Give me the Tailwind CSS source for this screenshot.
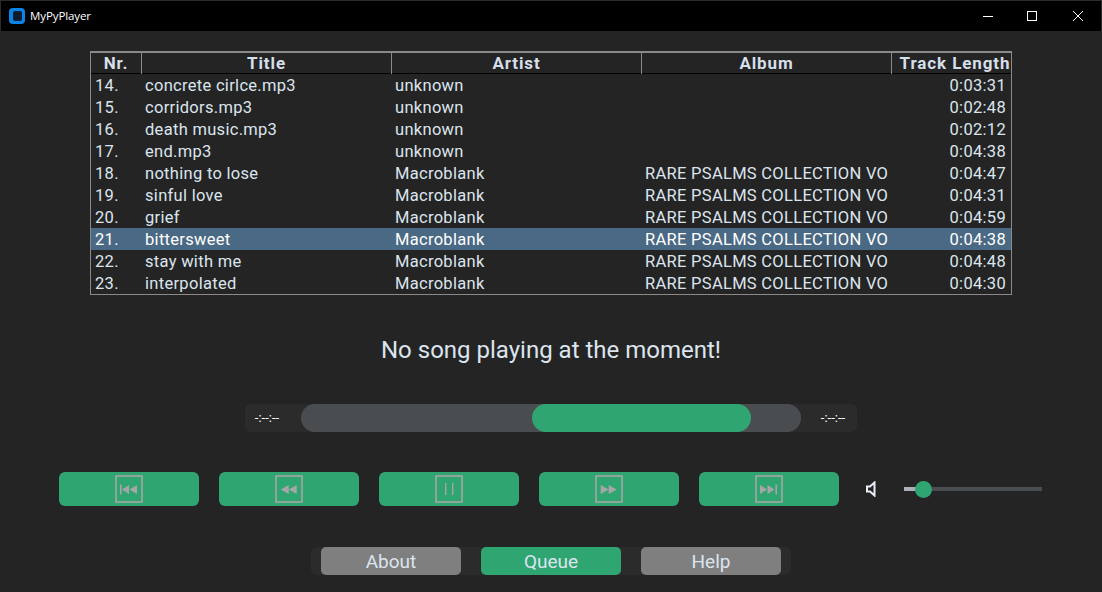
<!DOCTYPE html>
<html lang="en">
<head>
    <meta charset="UTF-8">
    <title>MyPyPlayer</title>
    <script src="https://cdn.jsdelivr.net/npm/@tailwindcss/browser@4"></script>
</head>
<body class="bg-[#242424] font-['Roboto',sans-serif] text-[#dce4ee] w-[1102px] h-[592px] overflow-hidden">

    <!-- title bar -->
    <header class="h-[31px] bg-black border-t border-x border-[#2b2b2b] flex items-center pl-[8px] text-white">
        <span class="w-[16px] h-[16px] rounded-[4px] bg-[#0a84e8] flex items-center justify-center">
            <span class="w-[9px] h-[10px] rounded-[2px] bg-[#0b1d2e]"></span>
        </span>
        <span class="ml-[5px] text-[11.5px] font-['Open_Sans',sans-serif] tracking-[-0.1px]">MyPyPlayer</span>
        <div class="ml-auto flex items-center">
            <svg class="w-[46px] h-[30px]" viewBox="0 0 46 30" fill="none" stroke="#fff"><path d="M18 15.5h10"/></svg>
            <svg class="w-[46px] h-[30px] ml-[-2px]" viewBox="0 0 46 30" fill="none" stroke="#fff"><rect x="18.5" y="10.5" width="9" height="9"/></svg>
            <svg class="w-[46px] h-[30px]" viewBox="0 0 46 30" fill="none" stroke="#fff"><path d="M18 10l10 10M28 10L18 20"/></svg>
        </div>
    </header>

    <!-- track table -->
    <div class="ml-[90px] mt-[20px] w-[922px] h-[244px] border border-[#8a8a8a] text-[16.5px] leading-[24px] tracking-[0.3px]">
        <div class="grid grid-cols-[51px_250px_250px_250px_119px] h-[22px] font-bold text-[17px] text-center border-t border-[#8a8a8a] border-b-black border-b text-[#d5dfe9] tracking-[0.9px] leading-[21px]">
            <div class="border-r border-[#8a8a8a]">Nr.</div>
            <div class="border-r border-[#8a8a8a]">Title</div>
            <div class="border-r border-[#8a8a8a]">Artist</div>
            <div class="border-r border-[#8a8a8a]">Album</div>
            <div class="whitespace-nowrap pl-[7px]">Track Length</div>
        </div>
        <div class="grid grid-cols-[50px_250px_250px_250px_120px] h-[22px]"><div class="pl-[4px]">14.</div><div class="pl-[4px]">concrete cirlce.mp3</div><div class="pl-[4px]">unknown</div><div></div><div class="text-right pr-[5px]">0:03:31</div></div>
        <div class="grid grid-cols-[50px_250px_250px_250px_120px] h-[22px]"><div class="pl-[4px]">15.</div><div class="pl-[4px]">corridors.mp3</div><div class="pl-[4px]">unknown</div><div></div><div class="text-right pr-[5px]">0:02:48</div></div>
        <div class="grid grid-cols-[50px_250px_250px_250px_120px] h-[22px]"><div class="pl-[4px]">16.</div><div class="pl-[4px]">death music.mp3</div><div class="pl-[4px]">unknown</div><div></div><div class="text-right pr-[5px]">0:02:12</div></div>
        <div class="grid grid-cols-[50px_250px_250px_250px_120px] h-[22px]"><div class="pl-[4px]">17.</div><div class="pl-[4px]">end.mp3</div><div class="pl-[4px]">unknown</div><div></div><div class="text-right pr-[5px]">0:04:38</div></div>
        <div class="grid grid-cols-[50px_250px_250px_250px_120px] h-[22px]"><div class="pl-[4px]">18.</div><div class="pl-[4px]">nothing to lose</div><div class="pl-[4px]">Macroblank</div><div class="pl-[4px] whitespace-nowrap overflow-hidden">RARE PSALMS COLLECTION VO</div><div class="text-right pr-[5px]">0:04:47</div></div>
        <div class="grid grid-cols-[50px_250px_250px_250px_120px] h-[22px]"><div class="pl-[4px]">19.</div><div class="pl-[4px]">sinful love</div><div class="pl-[4px]">Macroblank</div><div class="pl-[4px] whitespace-nowrap overflow-hidden">RARE PSALMS COLLECTION VO</div><div class="text-right pr-[5px]">0:04:31</div></div>
        <div class="grid grid-cols-[50px_250px_250px_250px_120px] h-[22px]"><div class="pl-[4px]">20.</div><div class="pl-[4px]">grief</div><div class="pl-[4px]">Macroblank</div><div class="pl-[4px] whitespace-nowrap overflow-hidden">RARE PSALMS COLLECTION VO</div><div class="text-right pr-[5px]">0:04:59</div></div>
        <div class="grid grid-cols-[50px_250px_250px_250px_120px] h-[22px] bg-[#4a6984] text-white"><div class="pl-[4px]">21.</div><div class="pl-[4px]">bittersweet</div><div class="pl-[4px]">Macroblank</div><div class="pl-[4px] whitespace-nowrap overflow-hidden">RARE PSALMS COLLECTION VO</div><div class="text-right pr-[5px]">0:04:38</div></div>
        <div class="grid grid-cols-[50px_250px_250px_250px_120px] h-[22px]"><div class="pl-[4px]">22.</div><div class="pl-[4px]">stay with me</div><div class="pl-[4px]">Macroblank</div><div class="pl-[4px] whitespace-nowrap overflow-hidden">RARE PSALMS COLLECTION VO</div><div class="text-right pr-[5px]">0:04:48</div></div>
        <div class="grid grid-cols-[50px_250px_250px_250px_120px] h-[22px]"><div class="pl-[4px]">23.</div><div class="pl-[4px]">interpolated</div><div class="pl-[4px]">Macroblank</div><div class="pl-[4px] whitespace-nowrap overflow-hidden">RARE PSALMS COLLECTION VO</div><div class="text-right pr-[5px]">0:04:30</div></div>
    </div>

    <!-- now playing -->
    <p class="mt-[39px] h-[32px] text-center text-[24px] leading-[32px]">No song playing at the moment!</p>

    <!-- progress -->
    <div class="ml-[245px] mt-[38px] w-[612px] h-[28px] rounded-[6px] bg-[#2b2b2b] flex items-center">
        <span class="w-[56px] pr-[12px] text-center text-[13px] text-white">-:--:--</span>
        <div class="w-[500px] h-[28px] rounded-full bg-[#4a4d50] pl-[231px]">
            <div class="w-[219px] h-[28px] rounded-full bg-[#2fa572]"></div>
        </div>
        <span class="w-[56px] pl-[8px] text-center text-[13px] text-white">-:--:--</span>
    </div>

    <!-- transport controls -->
    <div class="ml-[59px] mt-[40px] flex items-center">
        <button class="w-[140px] h-[34px] rounded-[6px] bg-[#2fa572] flex items-center justify-center">
            <svg class="w-[28px] h-[28px]" viewBox="0 0 28 28"><rect x="1" y="1" width="26" height="26" fill="none" stroke="#a6a6a6" stroke-width="1.6"/><path d="M5 9.5h1.6v10H5zM7 14.5l7-4.5v9zM14.5 14.5l7.5-4.5v9z" fill="#a6a6a6"/></svg>
        </button>
        <button class="ml-[20px] w-[140px] h-[34px] rounded-[6px] bg-[#2fa572] flex items-center justify-center">
            <svg class="w-[28px] h-[28px]" viewBox="0 0 28 28"><rect x="1" y="1" width="26" height="26" fill="none" stroke="#a6a6a6" stroke-width="1.6"/><path d="M5.7 14.5l8-4.5v9zM13.7 14.5l8-4.5v9z" fill="#a6a6a6"/></svg>
        </button>
        <button class="ml-[20px] w-[140px] h-[34px] rounded-[6px] bg-[#2fa572] flex items-center justify-center">
            <svg class="w-[28px] h-[28px]" viewBox="0 0 28 28"><rect x="1" y="1" width="26" height="26" fill="none" stroke="#a6a6a6" stroke-width="1.6"/><path d="M10 8h1.4v12H10zM17 8h1.4v12H17z" fill="#a6a6a6"/></svg>
        </button>
        <button class="ml-[20px] w-[140px] h-[34px] rounded-[6px] bg-[#2fa572] flex items-center justify-center">
            <svg class="w-[28px] h-[28px]" viewBox="0 0 28 28"><rect x="1" y="1" width="26" height="26" fill="none" stroke="#a6a6a6" stroke-width="1.6"/><path d="M5.7 10l8 4.5-8 4.5zM13.7 10l8 4.5-8 4.5z" fill="#a6a6a6"/></svg>
        </button>
        <button class="ml-[20px] w-[140px] h-[34px] rounded-[6px] bg-[#2fa572] flex items-center justify-center">
            <svg class="w-[28px] h-[28px]" viewBox="0 0 28 28"><rect x="1" y="1" width="26" height="26" fill="none" stroke="#a6a6a6" stroke-width="1.6"/><path d="M5 10l7 4.5-7 4.5zM12.5 10l7 4.5-7 4.5zM20.4 9.5h1.6v10h-1.6z" fill="#a6a6a6"/></svg>
        </button>
        <svg class="ml-[27px] w-[10px] h-[16px]" viewBox="0 0 10 16" fill="none" stroke="#e6edf5" stroke-width="2"><path d="M8.5 1.5v13L4 10.5H1v-5h3z"/></svg>
        <div class="ml-[28px] w-[138px] h-[4px] bg-[#4a4d50] relative">
            <div class="w-[12px] h-[4px] bg-[#aab0b6]"></div>
            <div class="absolute left-[11px] top-[-6px] w-[17px] h-[17px] rounded-full bg-[#2fa572]"></div>
        </div>
    </div>

    <!-- bottom nav -->
    <div class="ml-[311px] mt-[41px] w-[480px] h-[28px] rounded-[6px] bg-[#2b2b2b] flex justify-center gap-[20px] text-[19px] leading-[29px] text-center">
        <a class="w-[140px] h-[28px] rounded-[5px] bg-[#7f7f7f]">About</a>
        <a class="w-[140px] h-[28px] rounded-[5px] bg-[#2fa572]">Queue</a>
        <a class="w-[140px] h-[28px] rounded-[5px] bg-[#7f7f7f]">Help</a>
    </div>

</body>
</html>
